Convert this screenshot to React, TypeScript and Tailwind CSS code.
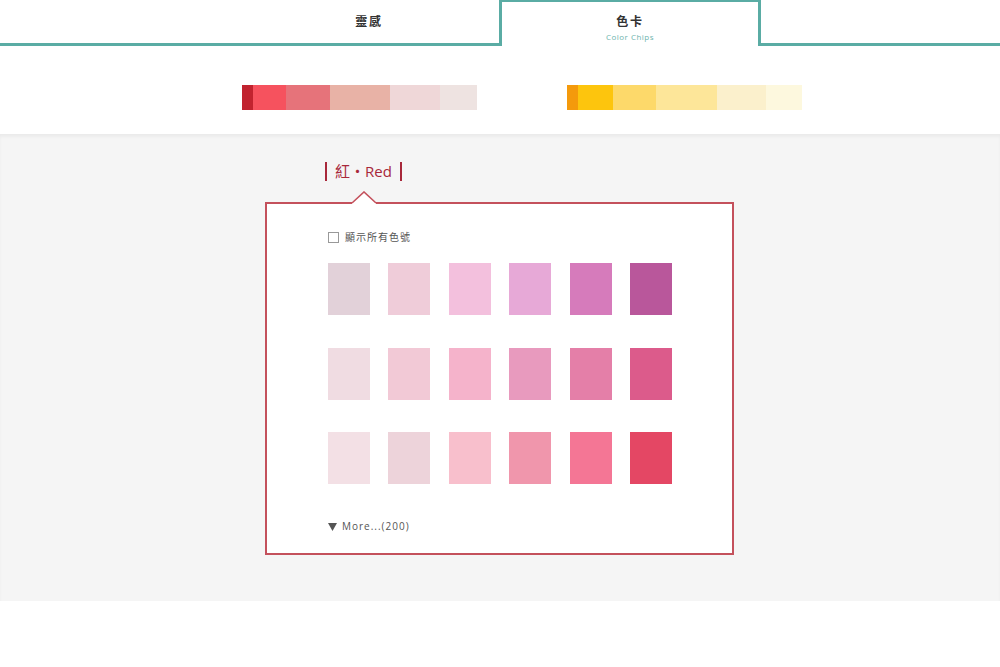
import React from 'react';

const RED_BAR = [
  { w: 11, c: '#c1232f' },
  { w: 33, c: '#f6525e' },
  { w: 44, c: '#e6737a' },
  { w: 60, c: '#e8b2a6' },
  { w: 50, c: '#efd7d8' },
  { w: 37, c: '#eee3e1' },
];

const YELLOW_BAR = [
  { w: 11, c: '#f49a0c' },
  { w: 35, c: '#fdc50d' },
  { w: 43, c: '#fdd96a' },
  { w: 61, c: '#fde699' },
  { w: 49, c: '#fbf0cc' },
  { w: 36, c: '#fdf8de' },
];

const CHIPS = [
  ['#e2d1d9', '#efccd9', '#f3c0dd', '#e7a9d7', '#d67bbb', '#b9579b'],
  ['#f0dce2', '#f2c9d6', '#f5b3cb', '#e89abe', '#e47fa8', '#dc5b8b'],
  ['#f3e0e5', '#edd3da', '#f8bfcc', '#f096ac', '#f47695', '#e44764'],
];

const FONT = { fontFamily: '"Open Sans", "Noto Sans CJK TC", sans-serif' };

function ColorBar({ segments }: { segments: { w: number; c: string }[] }) {
  return (
    <div className="flex h-[25px]">
      {segments.map((s, i) => (
        <div key={i} className="h-full" style={{ width: s.w, backgroundColor: s.c }} />
      ))}
    </div>
  );
}

export default function App() {
  return (
    <div className="w-[1000px] min-h-[667px] bg-white" style={FONT}>
      {/* Tabs */}
      <div className="flex h-[46px]">
        <div className="w-[499px] flex justify-end border-b-[3px] border-[#5aaca4]">
          <div className="w-[260px] flex justify-center pt-[13px] text-[12px] font-bold text-[#333] tracking-[0.15em]">
            靈感
          </div>
        </div>
        <div className="w-[262px] bg-white border-t-[2px] border-x-[3px] border-[#5aaca4] flex flex-col items-center pt-[11px]">
          <span className="text-[12px] font-bold text-[#333] leading-[18px] tracking-[0.15em]">色卡</span>
          <span className="text-[8px] text-[#6db4ae] leading-[12px] tracking-[0.06em]">Color Chips</span>
        </div>
        <div className="flex-1 border-b-[3px] border-[#5aaca4]" />
      </div>

      {/* Palette bars */}
      <div className="h-[88px] flex pl-[242px] pt-[39px] gap-[90px]">
        <ColorBar segments={RED_BAR} />
        <ColorBar segments={YELLOW_BAR} />
      </div>

      {/* Chips section */}
      <div className="bg-[#f5f5f5] h-[467px] border-t border-t-[#ebebeb] shadow-[inset_0_2px_3px_rgba(0,0,0,0.04)]">
        <div className="w-[469px] ml-[265px] pt-[27px]">
          <div className="pl-[60px] flex">
            <div className="flex items-center h-[19px] border-x-2 border-x-[#a8283a] px-[8px] text-[15px] text-[#a8283a] leading-none">
              紅・Red
            </div>
          </div>

          <div className="relative mt-[21px] h-[353px] bg-white border-2 border-solid border-[#c4515c] pl-[61px] pt-[27px]">
            <svg className="absolute left-[85px] -top-[13px]" width="24" height="13" viewBox="0 0 24 13">
              <polygon points="0,12 12,1 24,12 24,14 0,14" fill="#fff" />
              <polyline points="0,12 12,1 24,12" fill="none" stroke="#c4515c" strokeWidth="1.6" />
            </svg>

            <label className="flex items-center gap-[6px] h-[12px]">
              <span className="w-[11px] h-[11px] border border-[#999] bg-white" />
              <span className="text-[10px] text-[#555] tracking-[0.1em]">顯示所有色號</span>
            </label>

            <div className="mt-[20px] flex flex-col gap-[32.5px]">
              {CHIPS.map((row, r) => (
                <div key={r} className="flex gap-[18.4px]">
                  {row.map((c) => (
                    <div key={c} className="w-[42px] h-[52px]" style={{ backgroundColor: c }} />
                  ))}
                </div>
              ))}
            </div>

            <div className="mt-[35px] flex items-center gap-[5px] text-[10px] text-[#555] tracking-[0.1em]">
              <svg width="9" height="8" viewBox="0 0 9 8">
                <polygon points="0,0 9,0 4.5,8" fill="#555" />
              </svg>
              <span>More...(200)</span>
            </div>
          </div>
        </div>
      </div>
    </div>
  );
}
